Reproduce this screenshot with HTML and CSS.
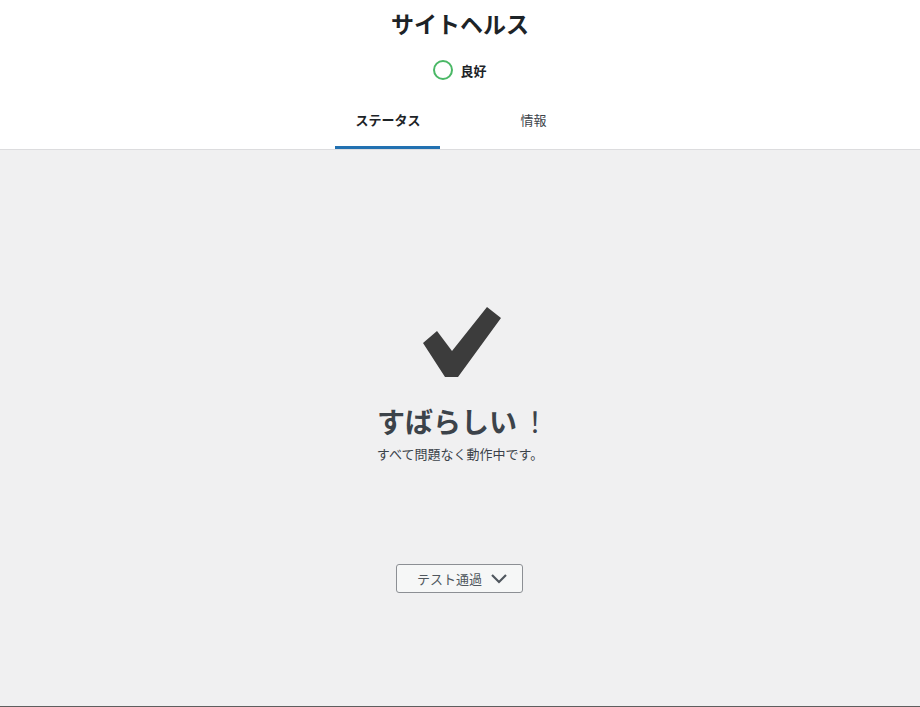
FILE: index.html
```html
<!DOCTYPE html>
<html lang="ja">
<head>
    <meta charset="UTF-8">
    <title>サイトヘルス</title>
    <link rel="stylesheet" href="styles.css">
</head>
<body>
<div class="header">
    <h1 class="title">サイトヘルス</h1>
    <div class="status">
        <span class="status-circle"></span>
        <span class="status-label">良好</span>
    </div>
    <nav class="tabs">
        <a class="tab tab-active" href="#">ステータス</a>
        <a class="tab tab-info" href="#">情報</a>
    </nav>
</div>
<div class="main">
    <svg class="check" width="84" height="74" viewBox="0 0 84 74">
        <polygon points="3,38 17,26 32,46 67,2 81,13 38,72 25,72" fill="#3c3c3c"/>
    </svg>
    <h2 class="great">すばらしい<span class="bang">！</span></h2>
    <p class="sub">すべて問題なく動作中です。</p>
    <button class="toggle" type="button">
        <span>テスト通過</span>
        <svg width="18" height="12" viewBox="0 0 18 12">
            <polyline points="2,2 9,9 16,2" fill="none" stroke="#50575e" stroke-width="2.2"/>
        </svg>
    </button>
</div>
<div class="footer-line"></div>
</body>
</html>
```

FILE: styles.css
```css
html, body, div, p, h1, h2, button {
    margin: 0;
    padding: 0;
}

body {
    font-family: "Noto Sans CJK JP", "Noto Sans", sans-serif;
    color: #1d2327;
    background: #f0f0f1;
}

.header {
    background: #fff;
    border-bottom: 1px solid #dcdcde;
    padding-top: 8px;
    display: flex;
    flex-direction: column;
    align-items: center;
}

.title {
    font-size: 23px;
    line-height: 30px;
    font-weight: 700;
    color: #1d2327;
}

.status {
    margin-top: 22px;
    margin-bottom: 2px;
    display: flex;
    align-items: center;
    height: 20px;
}

.status-circle {
    width: 16px;
    height: 16px;
    border: 2px solid #4ab866;
    border-radius: 50%;
}

.status-label {
    margin-left: 7px;
    font-size: 13px;
    font-weight: 700;
    color: #1d2327;
}

.tabs {
    margin-top: 14px;
    display: flex;
    padding-left: 2px;
}

.tab {
    display: block;
    padding: 14px 0 16px;
    line-height: 20px;
    font-size: 13px;
    color: #1d2327;
    text-decoration: none;
    border-bottom: 3px solid transparent;
}

.tab-active {
    width: 105px;
    text-align: center;
    font-weight: 700;
    border-bottom-color: #2271b1;
}

.tab-info {
    padding-left: 80px;
    padding-right: 40px;
    color: #3c434a;
}

.main {
    height: 556px;
    padding-top: 155px;
    box-sizing: border-box;
    display: flex;
    flex-direction: column;
    align-items: center;
    background: #f0f0f1;
}

.check {
    display: block;
    margin-left: 3px;
}

.great {
    margin-top: 24px;
    padding-left: 6px;
    font-size: 28px;
    line-height: 36px;
    font-weight: 700;
    color: #3c434a;
    white-space: nowrap;
}

.bang {
    font-weight: 400;
    margin-left: 4px;
}

.sub {
    margin-top: 5px;
    font-size: 13px;
    line-height: 20px;
    color: #3c434a;
}

.toggle {
    margin-top: 100px;
    width: 127px;
    height: 29px;
    display: flex;
    align-items: center;
    justify-content: center;
    gap: 8px;
    background: #f6f7f7;
    border: 1px solid #8c8f94;
    border-radius: 3px;
    font-family: "Noto Sans CJK JP", "Noto Sans", sans-serif;
    font-size: 13px;
    color: #50575e;
    padding-left: 6px;
    margin-right: 1px;
}

.footer-line {
    height: 1px;
    background: #5e5e5e;
}
```
